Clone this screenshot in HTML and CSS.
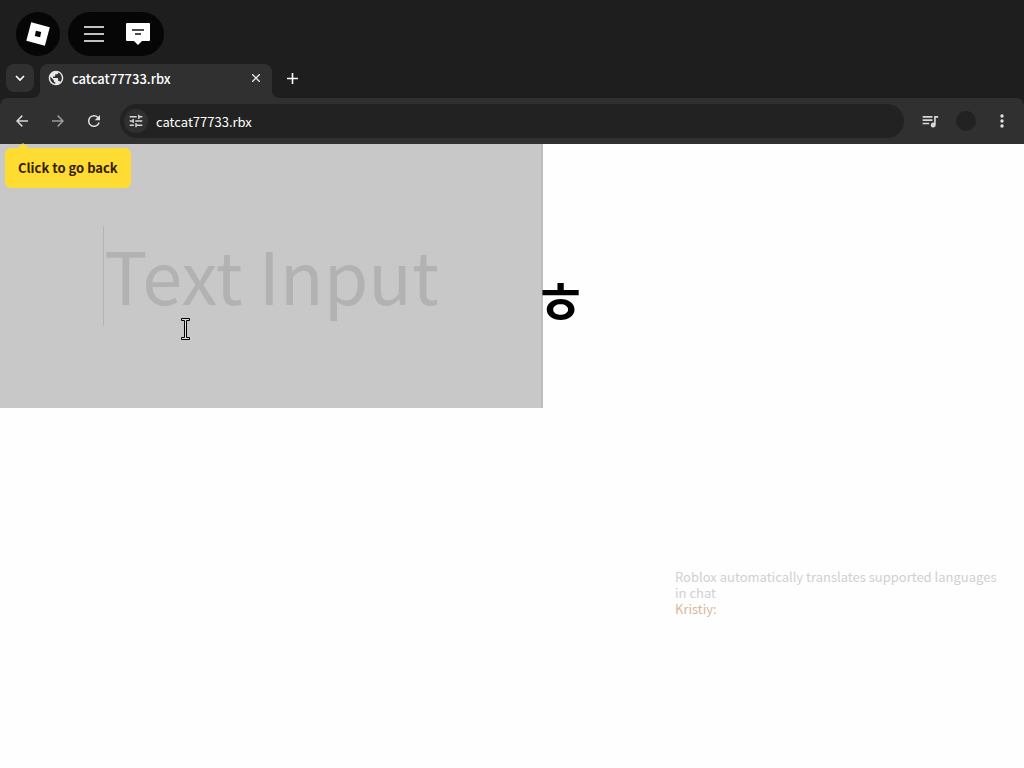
FILE: index.html
```html
<!DOCTYPE html>
<html lang="en">
<head>
    <meta charset="UTF-8">
    <meta name="viewport" content="width=device-width, initial-scale=1.0">
    <title>catcat77733.rbx</title>
    <link rel="stylesheet" href="styles.css">
</head>
<body>
    <!-- Game menu -->
    <header class="topbar">
        <button class="logo-button" aria-label="Roblox">
            <svg width="24" height="24" viewBox="0 0 24 24"><path fill="#fff" fill-rule="evenodd" d="M5.2 0.3 23.8 5.2 18.9 23.7 0.3 18.8ZM9.9 8.8 8.8 14.1 14.1 15.2 15.2 9.9Z"/></svg>
        </button>
        <div class="menu-pill">
            <button class="menu-button" aria-label="Menu">
                <svg width="20" height="16" viewBox="0 0 20 16"><path stroke="#fff" stroke-width="1.6" d="M0 1h20M0 8h20M0 15h20"/></svg>
            </button>
            <button class="menu-button" aria-label="Chat">
                <svg width="24" height="24" viewBox="0 0 24 24"><path fill="#fff" d="M1 1h22q1 0 1 1v16q0 1-1 1h-7l-4 4-4-4H1q-1 0-1-1V2q0-1 1-1z"/><path stroke="#111" stroke-width="1.6" d="M6 8h12M9 12h6"/></svg>
            </button>
        </div>
    </header>

    <!-- Tabs -->
    <div class="tabs">
        <button class="tab-list" aria-label="Search tabs">
            <svg width="12" height="12" viewBox="0 0 12 12" fill="none" stroke="#fff" stroke-width="1.6"><path d="M2 4l4 4 4-4"/></svg>
        </button>
        <div class="tab">
            <svg width="16" height="16" viewBox="1 1 22 22"><path fill="#e8e8e8" d="M12 2C6.48 2 2 6.48 2 12s4.48 10 10 10 10-4.48 10-10S17.52 2 12 2zm-1 17.93c-3.95-.49-7-3.85-7-7.93 0-.62.08-1.21.21-1.79L9 15v1c0 1.1.9 2 2 2v1.93zm6.9-2.54c-.26-.81-1-1.39-1.9-1.39h-1v-3c0-.55-.45-1-1-1H8v-2h2c.55 0 1-.45 1-1V7h2c1.1 0 2-.9 2-2v-.41c2.93 1.19 5 4.06 5 7.41 0 2.08-.8 3.97-2.1 5.39z"/></svg>
            <span class="tab-title">catcat77733.rbx</span>
            <button class="tab-close" aria-label="Close tab">
                <svg width="8" height="8" viewBox="0 0 8 8" stroke="#e0e0e0" stroke-width="1.4"><path d="M0 0l8 8M8 0L0 8"/></svg>
            </button>
        </div>
        <button class="new-tab" aria-label="New tab">
            <svg width="11" height="11" viewBox="0 0 11 11" stroke="#fff" stroke-width="1.6"><path d="M5.5 0v11M0 5.5h11"/></svg>
        </button>
    </div>

    <!-- Toolbar -->
    <nav class="toolbar">
        <div class="back">
            <button class="tool" aria-label="Back" aria-describedby="back-tip">
                <svg width="12" height="12" viewBox="0 0 12 12" fill="none" stroke="#d4d4d4" stroke-width="1.5"><path d="M12 6H1M6.3 0.6 1 6l5.3 5.4"/></svg>
            </button>
            <div class="tooltip" id="back-tip" role="tooltip">Click to go back</div>
        </div>
        <button class="tool" aria-label="Forward">
            <svg width="12" height="12" viewBox="0 0 12 12" fill="none" stroke="#999" stroke-width="1.5"><path d="M0 6h11M5.7 0.6 11 6l-5.3 5.4"/></svg>
        </button>
        <button class="tool" aria-label="Reload">
            <svg width="12" height="12" viewBox="4 4 16 16"><path fill="#e0e0e0" d="M17.65 6.35A7.96 7.96 0 0 0 12 4a8 8 0 1 0 7.73 10h-2.08A6 6 0 1 1 12 6c1.66 0 3.14.69 4.22 1.78L13 11h7V4l-2.35 2.35z"/></svg>
        </button>
        <div class="address">
            <button class="site-info" aria-label="Site information">
                <svg width="14" height="14" viewBox="2 2 20 20"><path fill="#d8d8d8" d="M3 17v2h6v-2H3zM3 5v2h10V5H3zm10 16v-2h8v-2h-8v-2h-2v6h2zM7 9v2H3v2h4v2h2V9H7zm14 4v-2H11v2h10zm-6-4h2V7h4V5h-4V3h-2v6z"/></svg>
            </button>
            <input class="url" type="text" value="catcat77733.rbx" aria-label="Address">
        </div>
        <button class="tool" aria-label="Media">
            <svg width="18" height="18" viewBox="1 3 22 18"><path fill="#d8d8d8" d="M15 6H3v2h12V6zm0 4H3v2h12v-2zM3 16h8v-2H3v2zM17 6v8.18A3 3 0 1 0 19 17V8h3V6h-5z"/></svg>
        </button>
        <button class="tool" aria-label="Profile"><span class="avatar"></span></button>
        <button class="tool" aria-label="More">
            <svg width="4" height="14" viewBox="0 0 4 14" fill="#e0e0e0"><circle cx="2" cy="2" r="1.7"/><circle cx="2" cy="7" r="1.7"/><circle cx="2" cy="12" r="1.7"/></svg>
        </button>
    </nav>

    <!-- Page -->
    <main class="page">
        <div class="hero">
            <div class="text-panel">
                <input class="text-input" type="text" placeholder="Text Input" aria-label="Text Input">
            </div>
            <div class="glyph">ㅎ</div>
        </div>
        <div class="chat">
            <p class="chat-line">Roblox automatically translates supported languages in chat</p>
            <p class="chat-line chat-name">Kristiy:</p>
        </div>
        <svg class="cursor" width="9" height="24" viewBox="0 0 9 24"><path fill="#ddd" stroke="#000" d="M.5 1.5h8v2h-3v17h3v2h-8v-2h3v-17h-3z"/></svg>
    </main>
</body>
</html>
```

FILE: styles.css
```css
* {
    box-sizing: border-box;
}

body {
    margin: 0;
    min-height: 100vh;
    display: flex;
    flex-direction: column;
    background: #1e1e1e;
    color: #fff;
    font-family: "Noto Sans CJK KR", "Noto Sans", sans-serif;
    font-size: 13px;
}

button,
input {
    font: inherit;
    color: inherit;
    background: none;
    border: none;
    padding: 0;
    margin: 0;
    outline: none;
}

button {
    display: flex;
    align-items: center;
    justify-content: center;
    cursor: pointer;
}

.topbar {
    display: flex;
    gap: 8px;
    height: 64px;
    padding: 12px 16px 8px;
}

.logo-button {
    width: 44px;
    height: 44px;
    border-radius: 50%;
    background: #060606;
}

.menu-pill {
    display: flex;
    height: 44px;
    padding: 0 4px;
    border-radius: 22px;
    background: #060606;
}

.menu-button {
    width: 44px;
}

.tabs {
    display: flex;
    height: 34px;
    padding-left: 6px;
}

.tab-list {
    width: 28px;
    height: 28px;
    margin-right: 6px;
    border-radius: 8px;
    background: #303030;
}

.tab {
    position: relative;
    display: flex;
    align-items: center;
    gap: 8px;
    width: 232px;
    padding: 0 8px 6px;
    border-radius: 8px 8px 0 0;
    background: #303030;
}

/* flared feet of the tab */
.tab::before,
.tab::after {
    content: "";
    position: absolute;
    bottom: 0;
    width: 8px;
    height: 8px;
}

.tab::before {
    right: 100%;
    background: radial-gradient(circle at 0 0, transparent 8px, #303030 8px);
}

.tab::after {
    left: 100%;
    background: radial-gradient(circle at 100% 0, transparent 8px, #303030 8px);
}

.tab-title {
    flex: 1;
    font-weight: 500;
}

.tab-close {
    width: 16px;
    height: 16px;
}

.new-tab {
    width: 40px;
    height: 28px;
}

.toolbar {
    display: flex;
    align-items: center;
    height: 46px;
    padding: 0 4px;
    border-radius: 8px 8px 0 0;
    background: #303030;
}

.back {
    position: relative;
}

.tool {
    width: 36px;
    height: 36px;
}

.tooltip {
    position: absolute;
    top: 45px;
    left: 1px;
    height: 40px;
    padding: 0 13px;
    border-radius: 6px;
    background: #ffdc32;
    color: #352000;
    font-weight: 700;
    line-height: 40px;
    white-space: nowrap;
    z-index: 1;
}

.tooltip::before {
    content: "";
    position: absolute;
    bottom: 100%;
    left: 13px;
    border: 5px solid transparent;
    border-top: none;
    border-bottom-color: #ffdc32;
}

.address {
    flex: 1;
    display: flex;
    align-items: center;
    gap: 8px;
    height: 34px;
    margin: 0 8px;
    padding: 0 4px;
    border-radius: 17px;
    background: #222;
}

.site-info {
    width: 24px;
    height: 24px;
    border-radius: 50%;
    background: #303030;
}

.url {
    flex: 1;
}

.avatar {
    width: 20px;
    height: 20px;
    border-radius: 50%;
    background: #222;
}

.page {
    position: relative;
    flex: 1;
    background: #fefefe;
}

.hero {
    display: flex;
    height: 264px;
}

.text-panel {
    display: flex;
    align-items: center;
    justify-content: center;
    width: 53%;
    border-right: 2px solid #bcbcbc;
    background: #c8c8c8;
}

.text-input {
    width: 334px;
    height: 100px;
    padding-bottom: 6px;
    border-left: 1px solid #b4b4b4;
    font-size: 72px;
}

.text-input::placeholder {
    color: #b2b2b2;
    opacity: 1;
}

.glyph {
    align-self: center;
    margin: 44px 0 0 -10px;
    color: #000;
    font-size: 60px;
    font-weight: 500;
}

.chat {
    width: 332px;
    margin: 161px 17px 0 auto;
    color: #d0d0d0;
    line-height: 16px;
}

.chat-line {
    margin: 0;
}

.chat-name {
    color: #d8b898;
}

.cursor {
    position: absolute;
    top: 173px;
    left: 181px;
}
```
